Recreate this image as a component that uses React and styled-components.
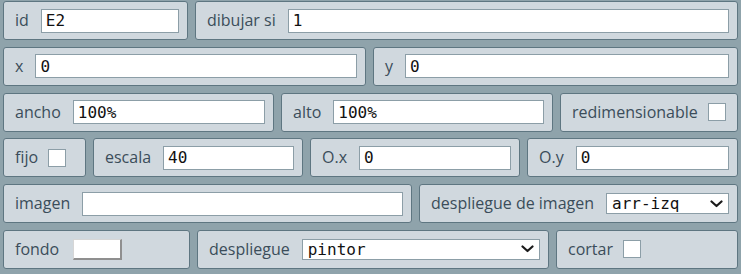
import React from "react";
import styled, { createGlobalStyle } from "styled-components";

const Global = createGlobalStyle`
  html, body { margin: 0; padding: 0; background: #8fa3ab; }
  body { font-family: "Open Sans", "Noto Sans", sans-serif; }
`;

const Panel = styled.div`
  width: 741px;
  box-sizing: border-box;
  padding: 1px 3px 0 3px;
  display: flex;
  flex-direction: column;
  gap: 6.8px;
`;

const Row = styled.div`
  display: flex;
  gap: 7px;
  height: 39px;
`;

const Cell = styled.div`
  box-sizing: border-box;
  flex: ${(p) => (p.$w ? `0 0 ${p.$w}px` : "1 1 0")};
  min-width: 0;
  display: flex;
  align-items: center;
  gap: 12px;
  padding: 0 8px 0 11px;
  background: #d0d8de;
  border: 1px solid #5e7681;
  border-radius: 3px;
`;

const Label = styled.span`
  font-size: 16px;
  color: #3b4d5a;
  white-space: nowrap;
  line-height: 1;
  padding-bottom: 1px;
`;

const TextBox = styled.div`
  box-sizing: border-box;
  flex: 1 1 0;
  min-width: 0;
  height: 24px;
  display: flex;
  align-items: center;
  padding: 0 4px;
  background: #ffffff;
  border: 1px solid #8c9ea7;
  font-family: "DejaVu Sans Mono", monospace;
  font-size: 16px;
  color: #111;
  white-space: nowrap;
  overflow: hidden;
`;

const Check = styled.span`
  box-sizing: border-box;
  flex: 0 0 auto;
  width: 18px;
  height: 18px;
  margin-left: -2px;
  background: #ffffff;
  border: 1px solid #8c9ea7;
`;

const Swatch = styled.span`
  box-sizing: border-box;
  flex: 0 0 auto;
  width: 49px;
  height: 21px;
  margin-left: 2px;
  background: #ffffff;
  border-style: solid;
  border-width: 1px 2px 2px 1px;
  border-color: #d6d6d6 #8f8f8f #8f8f8f #d6d6d6;
`;

const SelectBox = styled.div`
  box-sizing: border-box;
  flex: 1 1 0;
  min-width: 0;
  height: 21px;
  display: flex;
  align-items: center;
  justify-content: space-between;
  padding: 0 5px 0 5px;
  background: #ffffff;
  border: 1px solid #8c9ea7;
  font-family: "DejaVu Sans Mono", monospace;
  font-size: 16px;
  color: #111;
`;

const Chevron = () => (
  <svg width="13" height="8" viewBox="0 0 13 8" fill="none">
    <path d="M1.5 1.5 L6.5 6 L11.5 1.5" stroke="#1a1a1a" strokeWidth="2.2" strokeLinecap="round" strokeLinejoin="round" />
  </svg>
);

const Select = ({ value }) => (
  <SelectBox>
    <span>{value}</span>
    <Chevron />
  </SelectBox>
);

export default function App() {
  return (
    <>
      <Global />
      <Panel>
        <Row>
          <Cell $w={185}>
            <Label>id</Label>
            <TextBox>E2</TextBox>
          </Cell>
          <Cell>
            <Label>dibujar si</Label>
            <TextBox>1</TextBox>
          </Cell>
        </Row>
        <Row>
          <Cell $w={363}>
            <Label>x</Label>
            <TextBox>0</TextBox>
          </Cell>
          <Cell>
            <Label>y</Label>
            <TextBox>0</TextBox>
          </Cell>
        </Row>
        <Row>
          <Cell $w={271}>
            <Label>ancho</Label>
            <TextBox>100%</TextBox>
          </Cell>
          <Cell $w={272}>
            <Label>alto</Label>
            <TextBox>100%</TextBox>
          </Cell>
          <Cell>
            <Label>redimensionable</Label>
            <Check />
          </Cell>
        </Row>
        <Row>
          <Cell $w={83}>
            <Label>fijo</Label>
            <Check />
          </Cell>
          <Cell $w={210}>
            <Label>escala</Label>
            <TextBox>40</TextBox>
          </Cell>
          <Cell $w={210}>
            <Label>O.x</Label>
            <TextBox>0</TextBox>
          </Cell>
          <Cell>
            <Label>O.y</Label>
            <TextBox>0</TextBox>
          </Cell>
        </Row>
        <Row>
          <Cell $w={409}>
            <Label>imagen</Label>
            <TextBox />
          </Cell>
          <Cell>
            <Label>despliegue de imagen</Label>
            <Select value="arr-izq" />
          </Cell>
        </Row>
        <Row>
          <Cell $w={187}>
            <Label>fondo</Label>
            <Swatch />
          </Cell>
          <Cell $w={352}>
            <Label>despliegue</Label>
            <Select value="pintor" />
          </Cell>
          <Cell>
            <Label>cortar</Label>
            <Check />
          </Cell>
        </Row>
      </Panel>
    </>
  );
}
